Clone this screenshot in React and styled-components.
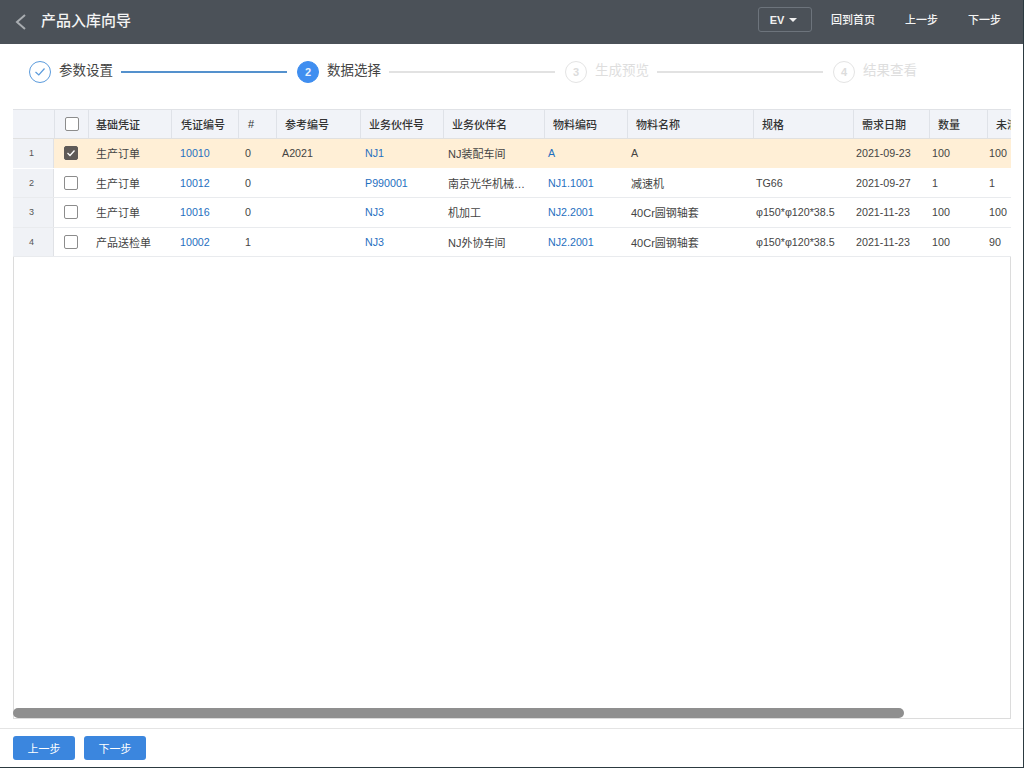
import styled, { createGlobalStyle } from "styled-components";

const GlobalStyle = createGlobalStyle`
  html, body {
    margin: 0;
    padding: 0;
    background: #fff;
  }
  body {
    font-family: "Liberation Sans", "Noto Sans CJK SC", sans-serif;
    font-size: 11px;
    color: #333;
  }
`;

const Page = styled.div`
  height: 768px;
  box-sizing: border-box;
  display: flex;
  flex-direction: column;
  overflow: hidden;
  border-right: 1px solid #2c3a40;
  border-bottom: 1px solid #2c3a40;
`;

const TopBar = styled.header`
  height: 44px;
  flex: none;
  display: flex;
  align-items: center;
  background: #4b5158;
  color: #fff;
  padding: 0 22px 0 15px;
`;

const BackIcon = styled.svg`
  width: 12px;
  height: 18px;
  margin-right: 14px;
`;

const Title = styled.h1`
  margin: -6px 0 0;
  flex: 1;
  font-size: 15px;
  font-weight: 500;
  color: #f4f4f4;
`;

const VersionButton = styled.div`
  width: 54px;
  height: 25px;
  box-sizing: border-box;
  margin-top: -5px;
  margin-right: 19px;
  padding-right: 3px;
  display: flex;
  align-items: center;
  justify-content: center;
  gap: 5px;
  border: 1px solid #6d747c;
  border-radius: 3px;
  font-weight: 700;
  color: #f0f0f0;
`;

const Caret = styled.span`
  width: 0;
  height: 0;
  border-left: 4px solid transparent;
  border-right: 4px solid transparent;
  border-top: 4px solid #f0f0f0;
`;

const TopAction = styled.span`
  margin-top: -6px;
  margin-left: ${(p) => p.$gap || 0}px;
  font-weight: 500;
  color: #f4f4f4;
`;

const Stepper = styled.div`
  height: 65px;
  flex: none;
  box-sizing: border-box;
  padding: 17px 0 0 29px;
`;

const StepRow = styled.div`
  display: flex;
  align-items: center;
  height: 22px;
`;

const StepCircle = styled.span`
  width: 22px;
  height: 22px;
  flex: none;
  box-sizing: border-box;
  border-radius: 50%;
  display: flex;
  align-items: center;
  justify-content: center;
  font-size: 11px;
  font-weight: 700;
  border: 1px solid ${(p) => (p.$state === "todo" ? "#e4e4e4" : "#5b9bdc")};
  background: ${(p) => (p.$state === "active" ? "#3f8ef0" : "#fff")};
  color: ${(p) => (p.$state === "active" ? "#e8f1fd" : "#dcdcdc")};
  ${(p) => p.$state === "active" && "border-color: #3f8ef0;"}
`;

const StepLabel = styled.span`
  margin: -2px 0 0 8px;
  font-size: 13.5px;
  line-height: 22px;
  color: ${(p) => (p.$state === "todo" ? "#dedede" : "#444")};
`;

const StepLine = styled.span`
  width: 166px;
  height: 2px;
  margin: 0 10px 0 8px;
  background: ${(p) => (p.$done ? "#5491cd" : "#e2e2e2")};
`;

const TableArea = styled.div`
  flex: 1;
  min-height: 0;
  margin: 0 12px 0 13px;
  display: flex;
  flex-direction: column;
  overflow: hidden;
  box-shadow: inset 0 0 0 1px #dcdcdc;
`;

const HeadRow = styled.div`
  flex: none;
  height: 30px;
  box-sizing: border-box;
  display: grid;
  grid-template-columns: 42px 34px 83px 67px 38px 84px 83px 101px 83px 126px 100px 76px 58px 80px;
  background: #f1f3f8;
  border-top: 1px solid #e0e2e6;
  border-bottom: 1px solid #e0e0e0;
  font-weight: 500;
  color: #333;
`;

const HeadCell = styled.div`
  display: flex;
  align-items: center;
  padding-left: ${(p) => p.$pad}px;
  border-right: 1px solid #dfe2e8;
  white-space: nowrap;
  overflow: hidden;
`;

const BoxCell = styled.div`
  display: flex;
  align-items: center;
  justify-content: center;
  border-right: ${(p) => (p.$head ? "1px solid #dfe2e8" : "none")};
`;

const CheckBox = styled.span`
  width: 14px;
  height: 14px;
  box-sizing: border-box;
  display: flex;
  align-items: center;
  justify-content: center;
  border-radius: 2px;
  border: 1px solid ${(p) => (p.$checked ? "#5e5a58" : "#8c8c8c")};
  background: ${(p) => (p.$checked ? "#5e5a58" : "#fff")};
`;

const BodyRow = styled.div`
  flex: none;
  height: 29.5px;
  box-sizing: border-box;
  display: grid;
  grid-template-columns: 41px 34px 84px 65px 37px 83px 83px 100px 83px 125px 100px 76px 57px 80px;
  background: ${(p) => (p.$selected ? "#ffefd6" : "#fff")};
  border-bottom: 1.5px solid ${(p) => (p.$selected ? "#fff" : "#e9ebee")};
`;

const IndexCell = styled.div`
  display: flex;
  align-items: center;
  justify-content: center;
  padding-right: 3px;
  background: #f0f2f6;
  border-right: 1px solid #e0e2e6;
  font-size: 9px;
  color: #555;
`;

const DataCell = styled.div`
  display: flex;
  align-items: center;
  padding-left: 8px;
  white-space: nowrap;
  overflow: hidden;
  font-size: ${(p) => (p.$latin ? 10.7 : 11)}px;
  color: ${(p) => (p.$link ? "#1f6fc0" : "#444")};
`;

const Spacer = styled.div`
  flex: 1;
`;

const ScrollThumb = styled.div`
  flex: none;
  width: 891px;
  height: 10px;
  margin-bottom: 1px;
  border-radius: 5px;
  background: #8f8f8f;
`;

const Footer = styled.footer`
  height: 39px;
  flex: none;
  box-sizing: border-box;
  margin-top: 9px;
  padding: 7px 13px 0;
  display: flex;
  gap: 9px;
  align-items: flex-start;
  border-top: 1px solid #e4e4e4;
`;

const FooterButton = styled.button`
  width: 62px;
  height: 24px;
  padding: 0;
  border: none;
  border-radius: 3px;
  background: #3b86de;
  color: #fff;
  font: inherit;
`;

const steps = [
  { label: "参数设置", state: "done" },
  { label: "数据选择", state: "active", num: 2 },
  { label: "生成预览", state: "todo", num: 3 },
  { label: "结果查看", state: "todo", num: 4 },
];

const columns = [
  { label: "基础凭证", pad: 7 },
  { label: "凭证编号", pad: 9 },
  { label: "#", pad: 9 },
  { label: "参考编号", pad: 8 },
  { label: "业务伙伴号", pad: 8 },
  { label: "业务伙伴名", pad: 8 },
  { label: "物料编码", pad: 8 },
  { label: "物料名称", pad: 8 },
  { label: "规格", pad: 8 },
  { label: "需求日期", pad: 8 },
  { label: "数量", pad: 8 },
  { label: "未清数量", pad: 8 },
];

const rows = [
  ["生产订单", "10010", "0", "A2021", "NJ1", "NJ装配车间", "A", "A", "", "2021-09-23", "100", "100"],
  ["生产订单", "10012", "0", "", "P990001", "南京光华机械…", "NJ1.1001", "减速机", "TG66", "2021-09-27", "1", "1"],
  ["生产订单", "10016", "0", "", "NJ3", "机加工", "NJ2.2001", "40Cr圆钢轴套", "φ150*φ120*38.5", "2021-11-23", "100", "100"],
  ["产品送检单", "10002", "1", "", "NJ3", "NJ外协车间", "NJ2.2001", "40Cr圆钢轴套", "φ150*φ120*38.5", "2021-11-23", "100", "90"],
];

const linkColumns = [1, 4, 6];
const isLatin = (value) => /^[\x20-\x7Eφ]+$/.test(value);

function App() {
  return (
    <Page>
      <GlobalStyle />
      <TopBar>
        <BackIcon viewBox="0 0 12 18">
          <polyline points="10,2 2,9 10,16" fill="none" stroke="#a9adb1" strokeWidth="2" />
        </BackIcon>
        <Title>产品入库向导</Title>
        <VersionButton>
          EV
          <Caret />
        </VersionButton>
        <TopAction>回到首页</TopAction>
        <TopAction $gap={30}>上一步</TopAction>
        <TopAction $gap={30}>下一步</TopAction>
      </TopBar>

      <Stepper>
        <StepRow>
          {steps.map((step, i) => (
            <StepRow key={step.label}>
              <StepCircle $state={step.state}>
                {step.state === "done" ? (
                  <svg width="12" height="10" viewBox="0 0 12 10">
                    <polyline points="1.5,5 4.8,8 10.5,1.5" fill="none" stroke="#5b9bdc" strokeWidth="1.2" />
                  </svg>
                ) : (
                  step.num
                )}
              </StepCircle>
              <StepLabel $state={step.state}>{step.label}</StepLabel>
              {i < steps.length - 1 && <StepLine $done={step.state === "done"} />}
            </StepRow>
          ))}
        </StepRow>
      </Stepper>

      <TableArea>
        <HeadRow>
          <HeadCell $pad={0} />
          <BoxCell $head>
            <CheckBox />
          </BoxCell>
          {columns.map((col) => (
            <HeadCell key={col.label} $pad={col.pad}>
              {col.label}
            </HeadCell>
          ))}
        </HeadRow>
        {rows.map((row, r) => (
          <BodyRow key={r} $selected={r === 0}>
            <IndexCell>{r + 1}</IndexCell>
            <BoxCell>
              <CheckBox $checked={r === 0}>
                {r === 0 && (
                  <svg width="10" height="8" viewBox="0 0 10 8">
                    <polyline points="1.5,4 4,6.5 8.5,1.5" fill="none" stroke="#fff" strokeWidth="1.3" />
                  </svg>
                )}
              </CheckBox>
            </BoxCell>
            {row.map((value, c) => (
              <DataCell key={c} $link={linkColumns.includes(c)} $latin={isLatin(value)}>
                {value}
              </DataCell>
            ))}
          </BodyRow>
        ))}
        <Spacer />
        <ScrollThumb />
      </TableArea>

      <Footer>
        <FooterButton>上一步</FooterButton>
        <FooterButton>下一步</FooterButton>
      </Footer>
    </Page>
  );
}

export default App;
